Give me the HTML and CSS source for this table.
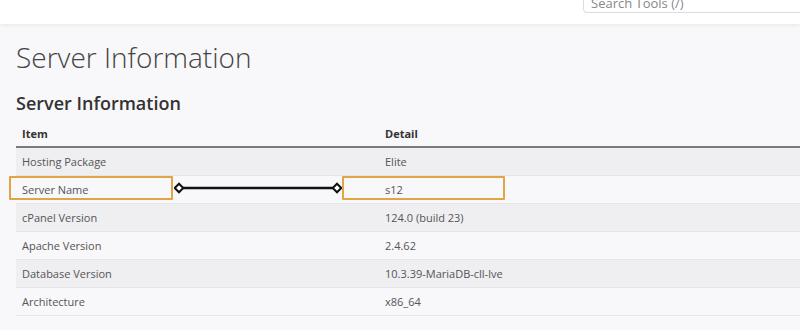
FILE: index.html
```html
<!DOCTYPE html>
<html lang="en">
<head>
    <meta charset="UTF-8">
    <meta name="viewport" content="width=device-width, initial-scale=1.0">
    <title>Server Information</title>
    <link rel="stylesheet" href="styles.css">
</head>
<body>
    <header class="topbar">
        <input class="search" type="text" placeholder="Search Tools (/)">
    </header>

    <main class="content">
        <h1 class="page-title">Server Information</h1>
        <h2 class="section-title">Server Information</h2>

        <div class="table-wrap">
            <table class="info-table">
                <thead>
                    <tr>
                        <th class="col-item">Item</th>
                        <th>Detail</th>
                    </tr>
                </thead>
                <tbody>
                    <tr><td>Hosting Package</td><td>Elite</td></tr>
                    <tr><td>Server Name</td><td>s12</td></tr>
                    <tr><td>cPanel Version</td><td>124.0 (build 23)</td></tr>
                    <tr><td>Apache Version</td><td>2.4.62</td></tr>
                    <tr><td>Database Version</td><td>10.3.39-MariaDB-cll-lve</td></tr>
                    <tr><td>Architecture</td><td>x86_64</td></tr>
                </tbody>
            </table>

            <!-- link between the server name label and its value -->
            <div class="mark mark-item"></div>
            <div class="mark mark-detail"></div>
            <svg class="link" width="168" height="14" viewBox="0 0 168 14">
                <line x1="6" y1="7" x2="162" y2="7" stroke="#111" stroke-width="2.4"/>
                <rect x="2" y="4" width="6" height="6" transform="rotate(45 5 7)" fill="#fff" stroke="#111" stroke-width="2"/>
                <rect x="160" y="4" width="6" height="6" transform="rotate(45 163 7)" fill="#fff" stroke="#111" stroke-width="2"/>
            </svg>
        </div>
    </main>
</body>
</html>
```

FILE: styles.css
```css
body {
    margin: 0;
    font-family: 'Open Sans', 'Liberation Sans', sans-serif;
    background-color: #f8f7f9;
    color: #555;
    overflow: hidden;
}

.topbar {
    height: 24px;
    background-color: #fff;
    box-shadow: 0 1px 4px rgba(0, 0, 0, 0.07);
    display: flex;
    padding-left: 583px;
    overflow: hidden;
}

.search {
    margin-top: -17px;
    height: 30px;
    width: 260px;
    flex-shrink: 0;
    box-sizing: border-box;
    border: 1px solid #dcdbe0;
    border-radius: 4px;
    padding: 9px 7px 0 7px;
    font-family: inherit;
    font-size: 13px;
    background-color: #fff;
}

.search::placeholder {
    color: #888;
}

.content {
    padding: 17px 0 0 16px;
}

.page-title {
    margin: 0;
    font-size: 28px;
    font-weight: 300;
    line-height: 1.2;
    color: #444;
}

.section-title {
    margin: 18px 0 6px 0;
    font-size: 18px;
    font-weight: 600;
    line-height: 1.2;
    color: #333;
}

.table-wrap {
    position: relative;
}

.info-table {
    width: 100%;
    border-collapse: collapse;
    font-size: 11px;
}

.info-table th {
    text-align: left;
    font-weight: 700;
    color: #333;
    height: 26px;
    padding: 0 6px;
    border-bottom: 2px solid #7a7a7a;
}

.col-item {
    width: 351px;
}

.info-table td {
    height: 27px;
    padding: 0 6px;
    border-bottom: 1px solid #e6e5e8;
}

.info-table tbody tr:nth-child(odd) {
    background-color: #efeef0;
}

.mark {
    position: absolute;
    top: 56px;
    height: 24px;
    box-sizing: border-box;
    border: 2px solid #e3a347;
    border-radius: 1px;
}

.mark-item {
    left: -7px;
    width: 164px;
}

.mark-detail {
    left: 326px;
    width: 163px;
}

.link {
    position: absolute;
    left: 158px;
    top: 61px;
}
```
